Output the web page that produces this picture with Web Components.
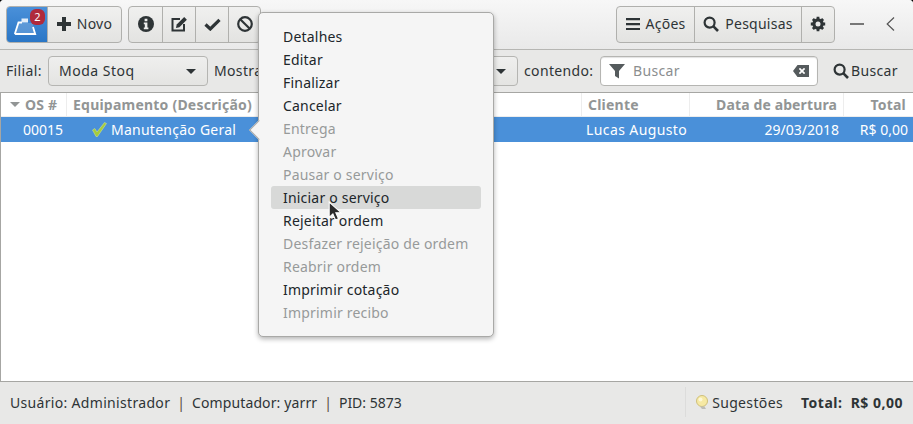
<!DOCTYPE html>
<html lang="pt">
<head>
<meta charset="utf-8">
<title>Stoq</title>
<style>
html,body{margin:0;padding:0;background:#000;}
body{width:913px;height:424px;overflow:hidden;font-family:"Noto Sans","Open Sans",sans-serif;font-size:14px;color:#2e3436;}
</style>
</head>
<body>
<stoq-window>
    <stoq-header slot="header"></stoq-header>
    <stoq-filter slot="filter"></stoq-filter>
    <stoq-table slot="table"></stoq-table>
    <stoq-status slot="status"></stoq-status>
    <stoq-menu slot="over"></stoq-menu>
</stoq-window>

<script>
;(function(document){
    'use strict';

    const FONT = `"Noto Sans","Open Sans",sans-serif`;
    const ICONS = {
        till: `<svg width="24" height="22" viewBox="0 0 24 22"><path d="M5.500 8h14l2.700 11H1.800z" fill="#fff" opacity=".18"/><path d="M1.800 19 5.500 7.500H9M1.800 19h20.400L20 12" fill="none" stroke="#fff" stroke-width="1.800"/><path d="M8.500 3.500H15v4H8.500z" fill="#fff" opacity=".85"/></svg>`,
        plus: `<svg width="14" height="14" viewBox="0 0 14 14"><path d="M5 0h4v5h5v4H9v5H5V9H0V5h5z" fill="#2e3436"/></svg>`,
        info: `<svg width="16" height="16" viewBox="0 0 16 16"><circle cx="8" cy="8" r="8" fill="#2e3436"/><path d="M6.600 2.800h2.800v2.400H6.600zM5.800 6.400h3.600v5h1v1.800H5.800v-1.800h1V8.200h-1z" fill="#ededed"/></svg>`,
        edit: `<svg width="17" height="16" viewBox="0 0 17 16"><path d="M9 3H1.500v11.500H13V8" fill="none" stroke="#2e3436" stroke-width="2"/><path d="M5 12l.7-3.400L13.200 1l2.700 2.700-7.500 7.600z" fill="#2e3436"/></svg>`,
        check: `<svg width="17" height="13" viewBox="0 0 17 13"><path d="M1.500 6.500 6.300 11 15.500 1.800" fill="none" stroke="#2e3436" stroke-width="3.200"/></svg>`,
        ban: `<svg width="16" height="16" viewBox="0 0 16 16"><circle cx="8" cy="8" r="6.800" fill="none" stroke="#2e3436" stroke-width="2.200"/><path d="M3.200 3.200l9.600 9.600" stroke="#2e3436" stroke-width="2.200"/></svg>`,
        menu: `<svg width="14" height="12" viewBox="0 0 14 12"><path d="M0 0h14v2.200H0zM0 5h14v2.200H0zM0 10h14v2H0z" fill="#2e3436"/></svg>`,
        search: `<svg width="16" height="16" viewBox="0 0 16 16"><circle cx="6.600" cy="6.600" r="5" fill="none" stroke="#2e3436" stroke-width="2.200"/><path d="M10.200 10.200 15 15" stroke="#2e3436" stroke-width="2.600"/></svg>`,
        gear: `<svg width="16" height="16" viewBox="0 0 16 16"><circle cx="8" cy="8" r="4.200" fill="none" stroke="#2e3436" stroke-width="3"/><path d="M8 .8v14.400M.8 8h14.400M2.900 2.900l10.200 10.200M13.100 2.900 2.900 13.100" stroke="#2e3436" stroke-width="2.800"/><circle cx="8" cy="8" r="2.500" fill="#e9e9e8"/></svg>`,
        funnel: `<svg width="16" height="16" viewBox="0 0 16 16"><path d="M0 1h16L10 8v7.500L6 13V8z" fill="#555b5d"/></svg>`,
        clear: `<svg width="16" height="12" viewBox="0 0 16 12"><path fill-rule="evenodd" d="M4.500 0H16v12H4.500L0 6zM7 2.800 5.800 4 7.800 6 5.800 8 7 9.200l2-2 2 2L12.200 8l-2-2 2-2L11 2.800l-2 2z" fill="#555b5d"/></svg>`,
        bulb: `<svg width="15" height="15" viewBox="0 0 15 15"><circle cx="7" cy="6" r="5.500" fill="#f6e9a4" stroke="#cfc07a"/><circle cx="5.500" cy="4.500" r="2" fill="#fdf8d8"/><path d="M5 11.500h4.500l1.500 2.500H7z" fill="#bdbdb8"/></svg>`,
        tick: `<svg width="15" height="15" viewBox="0 0 15 15"><path d="M.5 8 2.800 6.500 5 10 12.500.5 14.500 1.500 5.500 14.500h-1.500z" fill="#a6cc3c" stroke="#d9e9a0" stroke-width=".5"/></svg>`
    };

    class StoqWindow extends HTMLElement{
        constructor(){
            super();
            this.root = this.attachShadow({ mode: 'open' });
            this.root.innerHTML = `
                <style>
                :host{
                    display: flex;
                    flex-direction: column;
                    position: relative;
                    width: 913px;
                    height: 424px;
                    background: #e8e8e8;
                    border-radius: 4px 4px 0 0;
                    overflow: hidden;
                }
                ::slotted(stoq-table){
                    flex: 1;
                }
                </style>
                <slot name="header"></slot>
                <slot name="filter"></slot>
                <slot name="table"></slot>
                <slot name="status"></slot>
                <slot name="over"></slot>
            `;
        }
    }

    class StoqHeader extends HTMLElement{
        constructor(){
            super();
            this.root = this.attachShadow({ mode: 'open' });
            this.root.innerHTML = `
                <style>
                :host{
                    display: flex;
                    align-items: center;
                    box-sizing: border-box;
                    height: 50px;
                    padding: 0 0 0 6px;
                    background: linear-gradient(#f7f7f7, #e9e9e9);
                    border-bottom: 1px solid #b6b6b3;
                    font: 14px ${FONT};
                    color: #2e3436;
                }
                .group{
                    display: flex;
                    height: 37px;
                    box-sizing: border-box;
                    border: 1px solid #b0b0ad;
                    border-radius: 4px;
                    overflow: hidden;
                    background: linear-gradient(#f0f0ef, #e3e3e1);
                    margin-top: -1px;
                }
                .btn{
                    display: flex;
                    align-items: center;
                    justify-content: center;
                    gap: 6px;
                    box-sizing: border-box;
                    border-left: 1px solid #b0b0ad;
                }
                .btn:first-child{
                    border-left: 0;
                }
                .btn span{
                    margin-bottom: 2px;
                    letter-spacing: .25px;
                }
                .home{
                    position: relative;
                    width: 40px;
                    background: linear-gradient(#4a90d9, #2a76c6);
                }
                .home svg{
                    margin: 4px 0 0 -4px;
                }
                .btn .badge{
                    position: absolute;
                    left: 23px;
                    top: 2px;
                    width: 15px;
                    height: 16px;
                    margin: 0;
                    border-radius: 6px;
                    background: #b02a3c;
                    color: #fff;
                    font-size: 11px;
                    line-height: 15px;
                    text-align: center;
                    letter-spacing: 0;
                }
                .novo{ width: 74px; }
                .sq{ width: 33px; }
                .sq:last-child{ width: 32px; }
                .acoes{ width: 77px; }
                .pesq{ width: 107px; }
                .gear{ width: 33px; }
                .second{ margin-left: 6px; }
                .spacer{ flex: 1; }
                .wm{
                    display: flex;
                    align-items: center;
                    width: 78px;
                    margin-top: -1px;
                }
                .min{
                    width: 14px;
                    height: 2px;
                    background: #777;
                    margin-left: 15px;
                }
                .back{
                    margin-left: 22px;
                }
                </style>
                <div class="group">
                    <div class="btn home">${ICONS.till}<span class="badge">2</span></div>
                    <div class="btn novo">${ICONS.plus}<span>Novo</span></div>
                </div>
                <div class="group second">
                    <div class="btn sq">${ICONS.info}</div>
                    <div class="btn sq">${ICONS.edit}</div>
                    <div class="btn sq">${ICONS.check}</div>
                    <div class="btn sq">${ICONS.ban}</div>
                </div>
                <div class="spacer"></div>
                <div class="group">
                    <div class="btn acoes">${ICONS.menu}<span>Ações</span></div>
                    <div class="btn pesq">${ICONS.search}<span>Pesquisas</span></div>
                    <div class="btn gear">${ICONS.gear}</div>
                </div>
                <div class="wm">
                    <div class="min"></div>
                    <svg class="back" width="9" height="14" viewBox="0 0 9 14"><path d="M8 .5 1.200 7 8 13.500" fill="none" stroke="#555" stroke-width="1.200"/></svg>
                </div>
            `;
        }
    }

    class StoqFilter extends HTMLElement{
        constructor(){
            super();
            this.root = this.attachShadow({ mode: 'open' });
            this.root.innerHTML = `
                <style>
                :host{
                    display: flex;
                    align-items: center;
                    gap: 6px;
                    box-sizing: border-box;
                    height: 42px;
                    padding: 0 0 0 6px;
                    font: 14px ${FONT};
                    color: #2e3436;
                    background: #e8e8e7;
                }
                span{
                    margin-bottom: 2px;
                    letter-spacing: .35px;
                    white-space: nowrap;
                }
                .lbl1{ width: 36px; }
                .lbl2{ width: 50px; }
                .lbl3{ width: 70px; }
                .combo{
                    display: flex;
                    align-items: center;
                    justify-content: space-between;
                    box-sizing: border-box;
                    height: 30px;
                    padding: 0 11px 0 10px;
                    border: 1px solid #b5b5b2;
                    border-radius: 4px;
                    background: linear-gradient(#efefee, #e4e4e2);
                }
                .filial{ width: 160px; }
                .filial span{ letter-spacing: .5px; }
                .mostra{ width: 248px; }
                .arrow{
                    width: 0;
                    height: 0;
                    border-left: 5px solid transparent;
                    border-right: 5px solid transparent;
                    border-top: 5px solid #2e3436;
                }
                .entry{
                    display: flex;
                    align-items: center;
                    gap: 8px;
                    box-sizing: border-box;
                    width: 218px;
                    height: 30px;
                    padding: 0 8px;
                    background: #fff;
                    border: 1px solid #b5b5b2;
                    border-radius: 4px;
                    color: #8b8e8f;
                    box-shadow: inset 0 1px 1px #e2e2e2;
                }
                .entry span{ flex: 1; }
                .go{
                    display: flex;
                    align-items: center;
                    gap: 2px;
                    margin-left: 9px;
                }
                </style>
                <span class="lbl1">Filial:</span>
                <div class="combo filial"><span>Moda Stoq</span><i class="arrow"></i></div>
                <span class="lbl2">Mostrar</span>
                <div class="combo mostra"><span></span><i class="arrow"></i></div>
                <span class="lbl3">contendo:</span>
                <div class="entry">${ICONS.funnel}<span>Buscar</span>${ICONS.clear}</div>
                <div class="go">${ICONS.search}<span>Buscar</span></div>
            `;
        }
    }

    class StoqTable extends HTMLElement{
        constructor(){
            super();
            this.root = this.attachShadow({ mode: 'open' });
            this.root.innerHTML = `
                <style>
                :host{
                    display: block;
                    box-sizing: border-box;
                    background: #fff;
                    border: 1px solid #a6a6a3;
                    border-right: 0;
                    font: 14px ${FONT};
                }
                .row{
                    display: grid;
                    grid-template-columns: 66px 515px 108px 154px 1fr;
                }
                .head{
                    height: 24px;
                    align-items: center;
                    color: #929595;
                    font-weight: 700;
                    font-size: 14px;
                    letter-spacing: .22px;
                }
                .head div{
                    box-sizing: border-box;
                    height: 24px;
                    line-height: 23px;
                    padding: 0 6px;
                    border-right: 1px solid #ededed;
                    border-bottom: 1px solid #ededed;
                    white-space: nowrap;
                }
                .head div:last-child{
                    border-right: 0;
                    padding-right: 7px;
                }
                .sel{
                    height: 25px;
                    align-items: center;
                    background: #4a90d9;
                    color: #fff;
                }
                .sel div{
                    padding: 0 5px;
                    white-space: nowrap;
                }
                .head .os{
                    display: flex;
                    align-items: center;
                    gap: 5px;
                    padding-left: 9px;
                }
                .os i{
                    width: 0;
                    height: 0;
                    border-left: 5px solid transparent;
                    border-right: 5px solid transparent;
                    border-top: 5px solid #929595;
                }
                .right{ text-align: right; }
                .head .data{ letter-spacing: .12px; }
                .num{ padding-left: 22px !important; }
                .desc{
                    display: flex;
                    align-items: center;
                    gap: 4px;
                    padding-left: 25px !important;
                    letter-spacing: .25px;
                }
                .cli{
                    padding-left: 4px !important;
                    letter-spacing: .4px;
                }
                </style>
                <div class="row head">
                    <div class="os"><i></i><span>OS #</span></div>
                    <div>Equipamento (Descrição)</div>
                    <div>Cliente</div>
                    <div class="right data">Data de abertura</div>
                    <div class="right">Total</div>
                </div>
                <div class="row sel">
                    <div class="num">00015</div>
                    <div class="desc">${ICONS.tick}<span>Manutenção Geral</span></div>
                    <div class="cli">Lucas Augusto</div>
                    <div class="right">29/03/2018</div>
                    <div class="right">R$ 0,00</div>
                </div>
            `;
        }
    }

    class StoqStatus extends HTMLElement{
        constructor(){
            super();
            this.root = this.attachShadow({ mode: 'open' });
            this.root.innerHTML = `
                <style>
                :host{
                    display: flex;
                    align-items: center;
                    box-sizing: border-box;
                    height: 42px;
                    padding: 0 10px 2px 10px;
                    background: #e8e8e7;
                    font: 14px ${FONT};
                    color: #2e3436;
                }
                .info{
                    flex: 1;
                    display: flex;
                    gap: 7px;
                    white-space: nowrap;
                }
                .user{ letter-spacing: .32px; }
                .comp{ letter-spacing: .12px; }
                .sep{ color: #5a4a3a; }
                .sug{
                    display: flex;
                    align-items: center;
                    gap: 2px;
                    height: 30px;
                    padding-left: 9px;
                    border-left: 1px solid #dcdcdb;
                    letter-spacing: .35px;
                }
                .total{
                    margin-left: 18px;
                    font-weight: 700;
                    white-space: pre;
                    letter-spacing: .5px;
                }
                </style>
                <div class="info">
                    <span class="user">Usuário: Administrador</span>
                    <span class="sep">|</span>
                    <span class="comp">Computador: yarrr</span>
                    <span class="sep">|</span>
                    <span>PID: 5873</span>
                </div>
                <div class="sug">${ICONS.bulb}<span>Sugestões</span></div>
                <span class="total">Total:  R$ 0,00</span>
            `;
        }
    }

    class StoqMenu extends HTMLElement{
        constructor(){
            super();
            this.root = this.attachShadow({ mode: 'open' });
            const items = [
                ['Detalhes', 1], ['Editar', 1], ['Finalizar', 1], ['Cancelar', 1],
                ['Entrega', 0], ['Aprovar', 0], ['Pausar o serviço', 0],
                ['Iniciar o serviço', 2], ['Rejeitar ordem', 1],
                ['Desfazer rejeição de ordem', 0], ['Reabrir ordem', 0],
                ['Imprimir cotação', 1], ['Imprimir recibo', 0]
            ];
            let rows = '';
            items.forEach(item=>{
                let cls = item[1] === 0 ? 'off' : (item[1] === 2 ? 'hover' : '');
                rows += `<div class="item ${cls}">${item[0]}</div>`;
            });
            this.root.innerHTML = `
                <style>
                :host{
                    position: absolute;
                    left: 258px;
                    top: 12px;
                    display: block;
                    box-sizing: border-box;
                    width: 236px;
                    height: 325px;
                    padding: 12px;
                    background: #f5f5f5;
                    border: 1px solid #a9a9a7;
                    border-radius: 5px;
                    box-shadow: 0 2px 5px rgba(0,0,0,.3);
                    font: 14px ${FONT};
                    color: #2e3436;
                }
                .tip{
                    position: absolute;
                    left: -7px;
                    top: 110px;
                    width: 13px;
                    height: 13px;
                    background: #f5f5f5;
                    transform: rotate(45deg);
                    border-left: 1px solid #a9a9a7;
                    border-bottom: 1px solid #a9a9a7;
                }
                .item{
                    position: relative;
                    box-sizing: border-box;
                    height: 23px;
                    line-height: 24px;
                    padding: 0 12px;
                    border-radius: 3px;
                    color: #20262a;
                    white-space: nowrap;
                    letter-spacing: .2px;
                }
                .off{ color: #979a9a; }
                .hover{ background: #d8d9d8; }
                .cursor{
                    position: absolute;
                    left: 69px;
                    top: 188px;
                }
                </style>
                <div class="tip"></div>
                ${rows}
                <svg class="cursor" width="15" height="21" viewBox="0 0 14 20"><path d="M1 1v14.500l3.500-3.200 2.500 5.700 2.800-1.200-2.500-5.500H12.500z" fill="#2b2b2b" stroke="#fff" stroke-width="1"/></svg>
            `;
        }
    }

    customElements.define('stoq-window', StoqWindow);
    customElements.define('stoq-header', StoqHeader);
    customElements.define('stoq-filter', StoqFilter);
    customElements.define('stoq-table', StoqTable);
    customElements.define('stoq-status', StoqStatus);
    customElements.define('stoq-menu', StoqMenu);
})(document);
</script>
</body>
</html>
